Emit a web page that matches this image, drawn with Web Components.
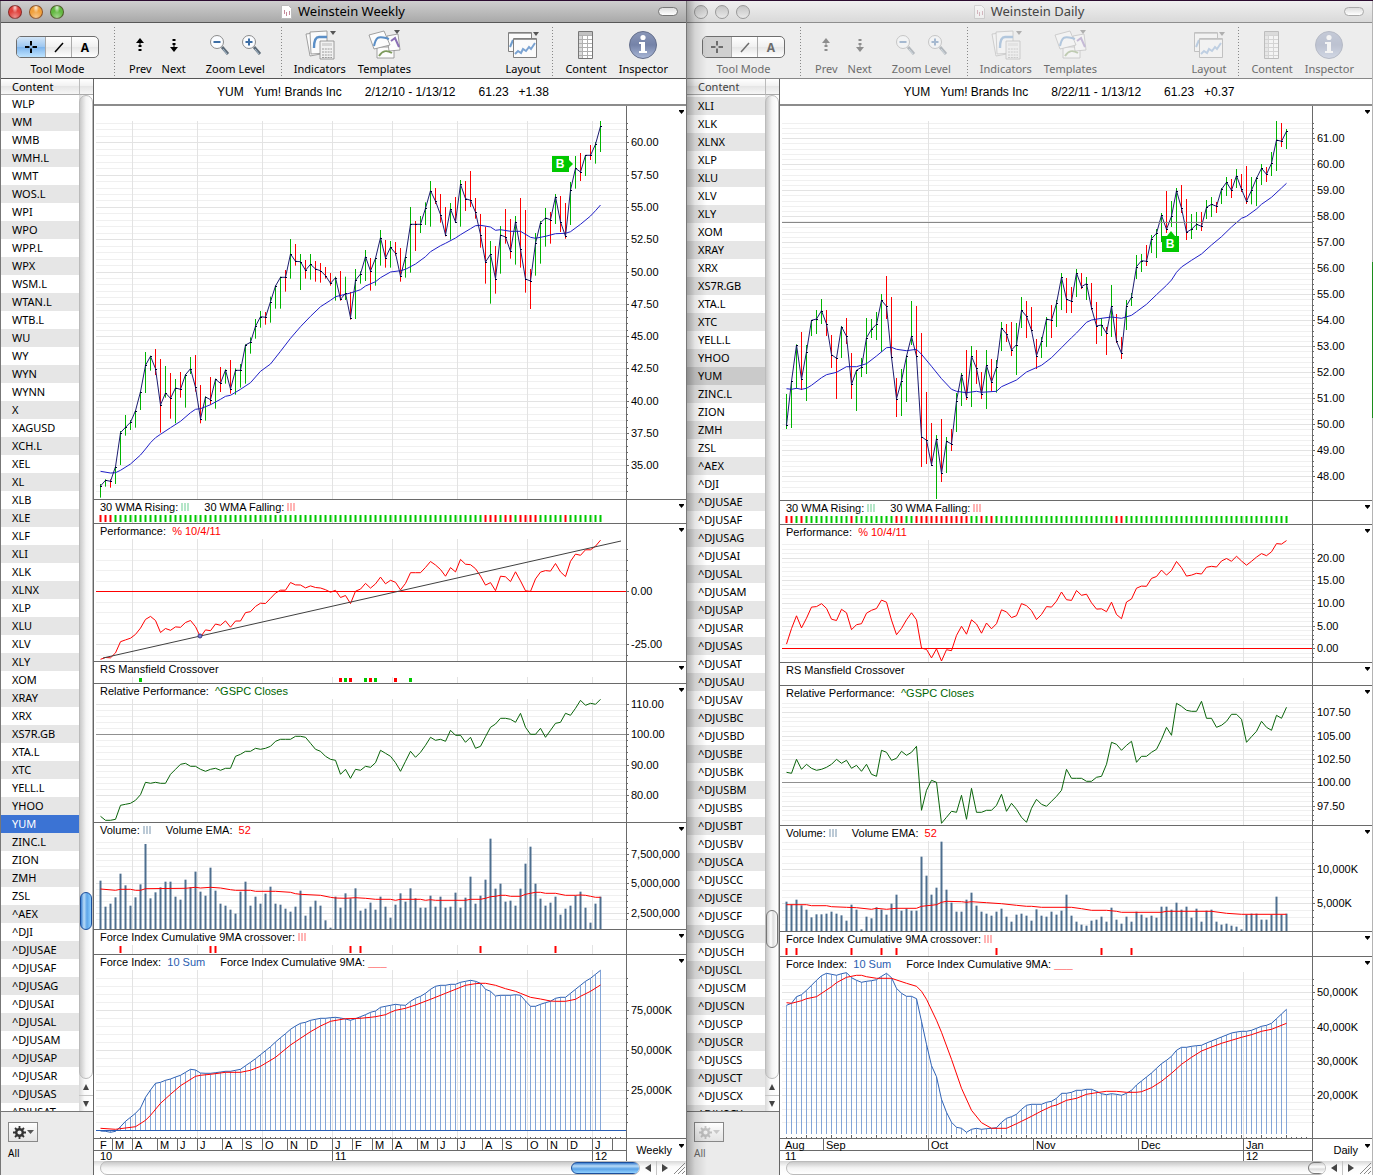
<!DOCTYPE html>
<html lang="en">
<head>
<meta charset="utf-8">
<title>Weinstein</title>
<style>
html, body { height: 100%; }
body {
  box-sizing: border-box;
  margin: 0;
  padding: 1px 1px 0 0;
  display: grid;
  grid-template-columns: 1fr 1fr;
  grid-template-rows: minmax(0, 1fr);
  overflow: hidden;
  background: linear-gradient(#2c0b30 0 1px, #b4b4b4 1px 262px, #1c8c1c 262px 418px, #b4b4b4 418px);
  font: 11px/15px "Noto Sans", "Open Sans", sans-serif;
  color: #000;
}
</style>
</head>
<body>
<chart-window name="weekly">Weinstein Weekly</chart-window>
<chart-window name="daily" inactive>Weinstein Daily</chart-window>

<script>
const CHART_FONT = `"Liberation Sans", Arial, sans-serif`;
const STEP = 5;
const FIRST_X = 6.5;
const GREEN = "#00b400";
const RED = "#ff0000";

const xAt = (i) => FIRST_X + i * STEP;

// symbols shown in the content lists
const shared = "XLI XLK XLNX XLP XLU XLV XLY XOM XRAY XRX XS7R.GB XTA.L XTC YELL.L YHOO YUM ZINC.L ZION ZMH ZSL ^AEX ^DJI ^DJUSAE ^DJUSAF ^DJUSAG ^DJUSAI ^DJUSAL ^DJUSAM ^DJUSAP ^DJUSAR ^DJUSAS ^DJUSAT";
const weeklySymbols = `WLP WM WMB WMH.L WMT WOS.L WPI WPO WPP.L WPX WSM.L WTAN.L WTB.L WU WY WYN WYNN X XAGUSD XCH.L XEL XL XLB XLE XLF ${shared}`.split(" ");
const dailySymbols = `${shared} ^DJUSAU ^DJUSAV ^DJUSBC ^DJUSBD ^DJUSBE ^DJUSBK ^DJUSBM ^DJUSBS ^DJUSBT ^DJUSBV ^DJUSCA ^DJUSCC ^DJUSCE ^DJUSCF ^DJUSCG ^DJUSCH ^DJUSCL ^DJUSCM ^DJUSCN ^DJUSCP ^DJUSCR ^DJUSCS ^DJUSCT ^DJUSCX ^DJUSCY`.split(" ");

// Series heights are in thirds of a pixel, counted down from each pane's offset.
// A price bar is high, low, close and g (up) or r (down).
const bars = (text) =>
  text.trim().split(/\s+/).map((bar) => {
    const [, high, low, close, dir] = bar.match(/(\d+)-(\d+)-(\d+)([gr])/);
    return { high: +high, low: +low, close: +close, up: dir === "g" };
  });
const list = (text) => text.trim().split(/\s+/).map(Number);
// index:height pairs, for lines that bend only now and then
const sparse = (text) => text.trim().split(/\s+/).map((pair) => pair.split(":").map(Number));

const weeklyBars = bars(`
1152-1193-1158g 1138-1160-1141g 1138-1163-1144r 1098-1152-1100g 993-1095-998g 945-1007-982g 960-990-967g 930-983-932g
873-930-875g 756-879-796g 767-812-769g 747-825-806r 777-998-915r 798-893-879g 819-956-895r 837-970-864g
816-893-868r 822-923-824g 771-822-806g 765-875-862r 855-970-957r 889-962-891g 831-914-899r 836-926-838g
801-876-850r 808-851-810g 780-881-867r 805-884-811g 792-863-811g 733-851-735g 712-761-727g 657-716-679g
633-683-650g 636-674-652r 590-668-605g 556-626-558g 530-626-532g 510-575-532r 417-536-462g 432-497-484r
462-570-485g 480-536-511r 462-539-493g 483-545-507r 489-548-512r 501-536-527r 519-557-550r 530-602-533g
513-602-598r 530-600-580g 576-659-653r 507-657-541g 514-551-522g 450-543-470g 474-572-513r 475-557-475g
390-497-413g 420-503-474r 423-503-442g 426-467-460r 444-545-529r 468-533-470g 321-518-373g 363-453-373r
348-399-373g 307-375-325g 243-380-272g 264-312-304r 282-368-344r 321-409-405r 309-419-327g 291-367-366r
240-380-253g 243-333-296r 213-321-301r 294-356-337r 342-443-404r 380-551-486r 423-611-463g 438-581-536r
378-521-405g 327-431-411r 357-476-454r 348-494-365g 294-503-448r 330-578-537r 507-627-543r 399-527-430g
363-491-368g 324-440-354g 336-431-359r 282-372-290g 288-396-366r 309-416-409r 246-375-270g 168-266-205g
159-243-216r 166-228-166g 135-180-166r 126-191-133g 63-156-79g`);

const dailyBars = bars(`
942-1047-1036g 903-1044-904g 793-926-795g 756-930-898r 795-963-815g 720-768-721g 690-762-717g 657-732-692g
690-768-732r 765-864-824r 834-957-835r 738-834-740g 714-792-769r 819-957-913r 870-993-871g 834-891-862g
714-882-773g 717-774-748g 696-780-733g 642-816-661g 588-717-679r 651-834-832r 894-1011-956r 867-1008-902g
826-966-829g 663-795-769g 678-830-829r 759-1161-1070r 936-1152-1081r 1029-1158-1154r 1065-1257-1076g 1017-1206-1180r
1071-1179-1084g 1047-1113-1092r 939-1056-962g 879-978-884g 810-960-952r 798-981-829g 810-912-865r 876-957-943r
810-987-856g 837-934-906r 840-938-862g 726-813-744g 732-786-762r 726-828-810r 729-885-794g 651-744-691g
663-774-709r 681-754-751r 777-867-827r 771-834-784g 711-801-717g 675-774-721r 660-741-670g 579-690-592g
594-699-658r 621-699-664r 567-651-579g 579-627-620r 591-660-611g 609-690-684r 666-792-738r 714-768-735g
741-825-760r 615-771-679g 702-789-784r 771-837-820r 660-750-677g 639-678-652g 525-597-560g 522-576-542g
495-558-544r 465-519-476g 447-534-460g 399-486-406g 333-459-448r 363-441-409g 324-486-332g 315-399-385r
357-480-457r 402-477-448g 396-450-433g 396-453-439r 360-417-382g 351-411-373g 366-399-379r 324-372-328g
291-348-307g 297-354-331r 267-324-287g 282-336-328r 258-372-364r 291-373-331g 291-378-295g 252-315-265g
261-306-283r 216-288-250g 123-273-180g 129-201-184r 147-207-154g`);

const two = (v) => v.toFixed(2);
const whole = (v) => v.toLocaleString("en-US");
const thousands = (v) => `${whole(v)}K`;

const wmaLegend = `30 WMA Rising: <legend-lines style="color:#b4e6c8"></legend-lines><i></i>30 WMA Falling: <legend-lines style="color:#ffb4b4"></legend-lines>`;
const perfLegend = `Performance:&nbsp; <span style="color:#f00">% 10/4/11</span>`;
const relLegend = `Relative Performance:&nbsp; <span style="color:#006400">^GSPC Closes</span>`;
const volLegend = `Volume: <legend-lines style="color:#bccad6"></legend-lines><i></i>Volume EMA:&nbsp; <span style="color:#f00">52</span>`;
const crossLegend = `Force Index Cumulative 9MA crossover: <legend-lines style="color:#ffb4b4"></legend-lines>`;
const forceLegend = `Force Index:&nbsp; <span style="color:#2a5db0">10 Sum</span><i></i>Force Index Cumulative 9MA: <span style="color:#ff7070">___</span>`;

const boards = {
  weekly: {
    quote: ["YUM", "Yum! Brands Inc", "2/12/10 - 1/13/12", "61.23", "+1.38"],
    symbols: weeklySymbols,
    listTop: 0,
    vThumb: [796, 38],
    hThumb: [477, 71],
    verticals: [38, 103, 168, 238, 298, 363, 433, 498],
    period: "Weekly",
    months: [[6, "F"], [18, "M"], [38, "A"], [63, "M"], [83, "J"], [103, "J"], [128, "A"], [148, "S"], [168, "O"], [193, "N"], [213, "D"], [238, "J"],
      [258, "F"], [278, "M"], [298, "A"], [323, "M"], [343, "J"], [363, "J"], [388, "A"], [408, "S"], [433, "O"], [453, "N"], [473, "D"], [498, "J"], [518, ""]],
    years: [[6, "10"], [238, "11"], [498, "12"]],
    panes: [
      { height: 393, offset: -6, bars: weeklyBars,
        scale: { y: 36, value: 60, px: 12.92, minor: 0.5, every: 5, format: two },
        line: sparse("0:1114 2:1119 3:1118 4:1111 6:1092 8:1065 9:1047 10:1028 11:1013 12:1003 14:983 16:964 18:938 19:928 20:926 22:914 24:898 25:889 26:886 28:868 30:848 32:814 34:792 36:754 38:715 40:680 42:649 44:620 46:601 47:590 50:579 52:569 53:558 55:545 56:533 58:516 60:512 61:508 63:492 65:470 66:455 68:437 69:430 71:414 72:404 74:386 75:377 76:376 78:381 79:391 80:389 82:394 84:394 86:412 87:415 89:409 91:401 93:400 94:395 96:373 98:348 99:332 100:315"),
        badge: { x: 458, y: 50, arrow: "right" } },
      { height: 23, legend: wmaLegend, strip: { reds: [0, 1, 2, 77, 78, 79, 81, 82, 84, 85, 86, 87, 93], all: true } },
      { height: 137, legend: perfLegend, zero: { y: 67, color: RED },
        scale: { y: 67, value: 0, px: 2.108, minor: 5, every: 5, format: two },
        values: weeklyBars.map((b) => ((60 - (b.close - 127) / 38.76) / 49.25 - 1) * 100), color: RED,
        trend: [9, 134, 527, 17], node: [106, 112] },
      { height: 21, legend: "RS Mansfield Crossover", dots: [[8, 1], [48, 0], [49, 1], [50, 0], [53, 1], [54, 0], [55, 1], [59, 0], [62, 1]] },
      { height: 138, legend: relLegend, offset: -194, zero: { y: 50, color: "#909090" },
        scale: { y: 50, value: 100, px: 3.03, minor: 2, every: 5, format: two }, color: "#0a640a",
        series: list("979 991 991 988 946 943 940 931 914 877 880 877 880 880 853 838 823 820 829 829 838 844 838 835 841 835 835 799 793 784 784 775 778 775 769 754 748 748 748 739 739 742 760 778 784 799 808 811 853 838 865 838 841 829 832 818 781 790 799 818 844 814 784 802 787 766 742 751 748 754 721 736 736 757 742 775 769 740 712 702 685 685 688 697 670 712 733 733 715 742 721 700 697 670 676 655 631 646 640 643 628") },
      { height: 106, legend: volLegend, offset: -3, base: 106,
        scale: { y: 60, value: 5000000, px: 0.00001184, minor: 500000, every: 5, format: whole },
        volume: list("182 260 251 232 161 196 257 232 193 72 235 217 202 185 185 230 239 179 202 155 215 227 143 212 251 257 269 281 215 185 257 230 251 221 200 251 254 266 275 260 212 287 260 242 257 301 323 230 263 220 235 205 272 266 248 269 230 260 293 254 220 245 205 235 263 263 227 260 230 263 260 218 263 233 170 251 227 179 56 206 191 245 242 257 206 131 80 191 236 257 248 230 284 266 257 227 215 263 308 251 230"),
        average: sparse("0:207 3:211 4:208 6:208 7:211 8:211 9:206 17:205 19:202 20:204 22:202 24:204 26:209 27:211 30:211 31:214 35:214 38:217 39:221 40:223 44:226 46:232 47:234 49:235 51:233 53:235 55:238 58:238 59:241 60:238 64:238 65:241 66:239 67:241 73:241 74:238 76:238 77:235 78:230 79:229 80:226 81:226 82:229 84:229 85:223 86:220 87:217 88:217 89:220 91:220 93:226 95:226 96:225 97:226 98:229 99:232 100:232") },
      { height: 24, legend: crossLegend, strip: { reds: [4, 22, 23, 50, 52, 76, 91] } },
      { height: 183, legend: forceLegend, offset: -135, base: 175, baseline: true, end: 171, ticks: [],
        scale: { y: 95, value: 50000, px: 0.0016, minor: 5000, every: 5, format: thousands },
        force: list("933 934 937 934 920 904 892 880 864 832 810 790 787 781 777 771 766 757 748 750 759 760 760 758 756 754 754 751 748 737 727 716 704 692 680 666 653 641 628 618 610 607 601 598 595 595 593 592 594 597 601 596 590 584 577 573 562 559 556 553 555 556 544 535 529 520 508 499 496 496 493 493 487 484 481 484 490 508 514 528 526 526 526 524 526 543 559 559 553 548 544 535 532 532 520 508 496 484 475 463 451"),
        average: sparse("0:925 3:928 7:920 9:901 10:886 12:850 14:823 16:797 19:769 20:766 22:763 24:759 25:757 28:757 30:751 32:739 35:712 38:675 40:655 42:635 44:618 46:604 49:596 52:595 54:592 55:590 57:584 58:577 59:571 61:565 63:555 66:538 69:520 72:502 73:496 75:491 76:490 77:490 79:496 81:506 83:514 84:520 86:532 88:537 90:543 91:544 93:544 95:538 96:529 98:514 100:495") },
    ],
  },
  daily: {
    quote: ["YUM", "Yum! Brands Inc", "8/22/11 - 1/13/12", "61.23", "+0.37"],
    symbols: dailySymbols,
    listTop: 2,
    vThumb: [814, 38],
    hThumb: [528, 21],
    verticals: [148, 463],
    period: "Daily",
    months: [[5, "Aug"], [43, "Sep"], [148, "Oct"], [253, "Nov"], [358, "Dec"], [463, "Jan"]],
    years: [[5, "11"], [463, "12"]],
    panes: [
      { height: 394, offset: -26, bars: dailyBars, cross: 116,
        scale: { y: 32, value: 61, px: 26, minor: 0.2, every: 5, format: two },
        line: sparse("0:926 1:928 2:925 3:928 4:925 5:916 7:893 8:884 10:877 12:860 14:860 16:851 18:828 20:803 21:802 22:808 24:812 26:808 27:823 29:859 31:896 33:928 34:934 36:938 38:934 39:937 42:934 43:920 46:900 48:876 51:856 53:833 55:803 57:773 58:759 60:727 61:720 63:715 65:711 67:715 69:706 70:695 72:673 74:644 76:616 77:600 78:577 79:561 81:541 83:522 85:495 87:470 89:441 91:415 92:409 94:387 95:373 97:352 99:324 100:310"),
        badge: { x: 382, y: 130, arrow: "up" } },
      { height: 23, legend: wmaLegend, strip: { reds: [0, 1, 3, 13, 22, 23, 26, 27, 28, 29, 30, 31, 32, 33, 34, 35, 36, 39, 41, 66, 67], all: true } },
      { height: 137, legend: perfLegend, zero: { y: 123, color: RED },
        scale: { y: 123, value: 0, px: 4.53, minor: 1, every: 5, format: two },
        values: dailyBars.map((b) => ((61 - (b.close - 175) / 78) / 49.48 - 1) * 100), color: RED },
      { height: 22, legend: "RS Mansfield Crossover", dots: [] },
      { height: 139, legend: relLegend, offset: -196, zero: { y: 96, color: "#909090" },
        scale: { y: 96, value: 100, px: 9.36, minor: 0.5, every: 5, format: two }, color: "#0a640a",
        series: list("847 850 808 838 823 835 841 838 832 823 808 820 811 835 826 844 823 853 859 781 787 811 805 784 796 787 769 961 901 871 877 1000 982 964 967 916 988 895 967 967 961 961 946 913 964 940 958 982 997 955 928 943 949 934 919 901 838 865 865 865 874 874 862 859 823 757 763 781 766 754 817 799 799 787 778 748 712 736 640 649 661 664 664 634 685 685 712 706 694 673 673 688 757 740 724 694 712 721 676 685 652") },
      { height: 105, legend: volLegend, offset: -6, base: 105,
        scale: { y: 77, value: 5000, px: 0.0068, minor: 1000, every: 5, format: thousands },
        volume: list("245 254 239 256 269 292 283 283 281 275 281 286 302 254 269 328 290 295 262 269 284 251 224 272 266 272 272 110 167 224 203 65 209 248 275 275 239 218 257 275 281 287 275 266 290 305 284 281 287 302 268 287 290 275 284 272 224 287 305 314 317 302 299 290 305 263 299 311 290 305 275 284 293 287 293 260 260 269 248 269 260 293 266 305 272 269 305 314 311 317 320 328 284 281 281 299 299 284 230 284 281"),
        average: sparse("0:254 4:254 5:257 8:257 9:260 12:262 14:263 17:268 18:265 20:268 22:265 26:265 27:259 30:254 31:247 32:244 35:245 36:247 37:245 40:248 43:251 46:256 48:259 49:259 51:262 57:262 59:266 61:271 64:271 66:274 67:277 75:277 76:274 85:274 88:280 91:283 100:283") },
      { height: 24, legend: crossLegend, strip: { reds: [0, 2, 13, 19, 22, 42, 63, 69] } },
      { height: 181, legend: forceLegend, offset: -137, base: 177, end: 169, ticks: [4, 9, 13, 18, 23, 28, 33, 38, 43, 48, 53, 58, 63, 67, 72, 77, 82, 87, 91, 95, 100],
        scale: { y: 35, value: 50000, px: 0.00342, minor: 2000, every: 5, format: thousands },
        force: list("556 550 530 524 511 496 481 467 460 463 466 461 458 473 481 487 484 482 479 469 460 473 505 520 529 529 536 604 673 737 770 838 877 907 922 925 937 928 925 928 926 925 923 907 895 890 883 868 856 853 853 853 847 844 835 820 820 817 811 811 808 808 814 821 824 821 823 826 820 811 795 783 771 759 745 731 721 709 691 682 682 679 677 676 669 663 657 651 645 639 636 634 634 631 625 619 616 610 596 582 568"),
        average: sparse("0:548 1:550 3:542 4:536 6:530 9:500 10:488 12:472 14:466 15:466 16:470 18:475 21:475 24:490 26:499 27:514 28:538 30:601 31:637 33:718 35:805 37:871 39:908 41:925 44:925 46:911 47:904 49:889 51:873 53:859 54:855 56:841 57:838 58:835 60:823 62:818 64:814 66:814 68:817 70:817 71:815 73:803 75:784 77:760 79:733 81:712 83:693 85:681 87:670 89:661 91:652 93:644 95:634 97:628 100:610") },
    ],
  },
};

const icons = {
  indicators: `<svg width="32" height="32"><g stroke="#8a8a8a" stroke-width=".8" fill="#fbfbfb"><path d="M2 5l17-2 3 21-16 3z"/><path d="M6 3l17-1v22l-16 1z"/></g><path d="M10 19c0-9 2-11 5-11h8" fill="none" stroke="#5b8fc7" stroke-width="2.4"/><path d="M16 12h14v18H16z" fill="#f1f1f1" stroke="#888" stroke-width=".8"/><path d="M18 14h10v3H18z" fill="#d5d5d5"/><path d="M18 20h10M18 23h10M18 26h10M18 28.500h10" stroke="#9a9a9a" stroke-dasharray="2 .8"/><path d="M26 2h6l-3 4z" fill="#555"/></svg>`,
  templates: `<svg width="34" height="32"><g stroke="#8a8a8a" stroke-width=".8" fill="#fcfcfc"><path d="M10 18h17v11H10z"/><path d="M20 7l11-2 2 16-11 1z"/><path d="M2 6l15-4 6 14-16 4z"/></g><path d="M7 17c2-9 4-10 12-8l3 1" fill="none" stroke="#5b8fc7" stroke-width="2"/><path d="M24 12l4-3 4 9" fill="none" stroke="#8a6fb5" stroke-width="2"/><path d="M12 27c4-6 8-6 13-3" fill="none" stroke="#7d9a5c" stroke-width="2"/><path d="M27 1h6l-3 4z" fill="#555"/></svg>`,
  layout: `<svg width="32" height="30"><g fill="#fbfbfb" stroke="#808080"><path d="M1.500 2.500h23v19h-23z"/><path d="M3 17l3-7" stroke="#6f9dce" stroke-width="2"/><path d="M6.500 8.500h23v19h-23z"/></g><path d="M2 3.500h22" stroke="#aaa"/><path d="M7 9.500h22" stroke="#999"/><path d="M8 24l3-3 3 2 2-4 3 2 3-4 2 2 4-6" fill="none" stroke="#7ba3d2" stroke-width="2"/><path d="M26 2h6l-3 4z" fill="#555"/></svg>`,
  content: `<svg width="18" height="30"><path d="M1.500 1.500h14v27h-14z" fill="#fff" stroke="#777"/><path d="M2 2h13v3H2z" fill="#c2c2c2"/><path d="M2 5h3v23H2z" fill="#dcdcdc"/><path d="M2 5.500h13M2 9.500h13M2 13.500h13M2 17.500h13M2 21.500h13M2 25.500h13M5.500 5v23M10.500 5v23" stroke="#b0b0b0"/></svg>`,
  inspector: `<svg width="30" height="30"><defs><linearGradient id="g" x2="0" y2="1"><stop stop-color="#8a97b8"/><stop offset=".5" stop-color="#7583a8"/><stop offset="1" stop-color="#aab8d8"/></linearGradient></defs><circle cx="15" cy="15" r="13.500" fill="url(#g)" stroke="#66708c"/><circle cx="15" cy="7.500" r="2.600" fill="#fff"/><path d="M11 12h6v9h2v2h-8v-2h2v-7h-2z" fill="#fff"/></svg>`,
  prev: `<svg width="10" height="16"><path d="M5 1l4 5H1z"/><path d="M3.500 8h3v2h-3zM3.500 12h3v2h-3zM4.500 5h1v3h-1z"/></svg>`,
  next: `<svg width="10" height="16"><path d="M5 15l4-5H1z"/><path d="M3.500 6h3v2h-3zM3.500 2h3v2h-3zM4.500 8h1v3h-1z"/></svg>`,
  zoomOut: `<svg width="22" height="24"><path d="M14 14l6 7" stroke="#5e6b78" stroke-width="3"/><path d="M15 16l4 5" stroke="#a9bfd0"/><circle cx="9" cy="9" r="6.500" fill="#fafcff" stroke="#8c8c8c"/><path d="M5.500 9h7" stroke="#3d6ea5" stroke-width="2"/></svg>`,
  zoomIn: `<svg width="22" height="24"><path d="M14 14l6 7" stroke="#5e6b78" stroke-width="3"/><path d="M15 16l4 5" stroke="#a9bfd0"/><circle cx="9" cy="9" r="6.500" fill="#fafcff" stroke="#8c8c8c"/><path d="M5.500 9h7M9 5.500v7" stroke="#3d6ea5" stroke-width="2"/></svg>`,
  menu: `<svg width="5" height="4"><path d="M0 0h5v1L2.500 4 0 1z"/></svg>`,
};

const reset = `
*, *::before { box-sizing: border-box; }
svg { display: block; }
button {
  all: unset;
  box-sizing: border-box;
  display: block;
}
`;

// every element renders once, from its own markup() and the css it names
class BaseElement extends HTMLElement {
  connectedCallback() {
    if (this.shadowRoot) return;
    const root = this.attachShadow({ mode: "open" });
    root.innerHTML = `<style>${reset}${this.constructor.css}</style>${this.markup()}`;
    this.ready(root);
  }

  ready() {}
}

class LegendLines extends BaseElement {
  static css = `:host { display: inline-block; }`;

  markup() {
    return `<svg width="8" height="8"><path d="M1 0v8M4 0v8M7 0v8" stroke="currentColor" stroke-width="2"/></svg>`;
  }
}

class TitleBar extends BaseElement {
  static css = `
:host {
  display: grid;
  grid-template-columns: 80px 1fr 80px;
  align-items: center;
  height: 22px;
  border-bottom: 1px solid #585858;
  background: linear-gradient(#cfcfcf, #a9a9a9);
  font-size: 13px;
  padding: 0 8px 0 7px;
}
:host([inactive]) {
  background: linear-gradient(#f0f0f0, #d9d9d9);
  border-color: #8e8e8e;
  color: #444;
}
.lights { display: flex; gap: 7px; }
.lights button {
  width: 14px;
  height: 14px;
  border-radius: 50%;
  border: 1px solid rgba(60, 20, 20, 0.55);
  background: radial-gradient(ellipse at 50% 15%, #fffc, transparent 35%), radial-gradient(circle at 50% 90%, #fff6, transparent 50%), var(--light);
}
:host([inactive]) .lights button {
  background: linear-gradient(#c4c4c4, #e8e8e8);
  border-color: #999;
}
.title { display: flex; gap: 6px; justify-content: center; align-items: center; }
:host([inactive]) .title svg { opacity: 0.5; }
.pill {
  justify-self: end;
  width: 20px;
  height: 9px;
  border: 1px solid #777;
  border-radius: 5px;
  background: linear-gradient(#ddd, #fff);
}
:host([inactive]) .pill { border-color: #aaa; }
`;

  markup() {
    return `
<div class="lights">
  <button aria-label="Close" style="--light:#e0423c"></button>
  <button aria-label="Minimize" style="--light:#f0a03c"></button>
  <button aria-label="Zoom" style="--light:#62b840"></button>
</div>
<div class="title">
  <svg width="11" height="14"><path d="M.5.500h7l3 3v10h-10z" fill="#fff" stroke="#bbb"/><path d="M3.500 5v4M5.500 7v4M8.500 6v4" stroke="#c58a9a"/></svg>
  <span><slot></slot></span>
</div>
<button class="pill" aria-label="Toggle toolbar"></button>`;
  }
}

class ToolItem extends BaseElement {
  static css = `
:host {
  display: block;
  padding-top: 2px;
  text-align: center;
  white-space: nowrap;
}
.item { display: grid; grid-template-rows: 32px 15px; justify-items: center; align-items: center; }
.icons { display: flex; gap: 10px; align-items: center; justify-content: center; }
:host([inactive]) { color: #6c6c6c; }
:host([inactive]) svg { opacity: 0.4; }
`;

  markup() {
    const names = this.getAttribute("icon").split(" ");
    if (names.length > 1) {
      return `<div class="item"><div class="icons">${names.map((n) => `<button aria-label="${n}">${icons[n]}</button>`).join("")}</div><slot></slot></div>`;
    }
    return `<button class="item">${icons[names[0]]}<span><slot></slot></span></button>`;
  }
}

class ToolMode extends BaseElement {
  static css = `
:host {
  display: grid;
  grid-template-rows: 32px 15px;
  align-content: start;
  justify-items: center;
  align-items: center;
  padding: 2px 3px 0 0;
}
.segments {
  display: grid;
  grid-template-columns: 28px 26px 27px;
  height: 22px;
  margin-top: 4px;
  border: 1px solid #6e6e6e;
  border-radius: 5px;
  overflow: hidden;
  background: linear-gradient(#fff, #f0f0f0 50%, #e6e6e6 50%, #fff);
}
button { display: grid; place-items: center; border-left: 1px solid #aaa; font-weight: bold; font-size: 12px; }
button:first-child { border: 0; background: linear-gradient(#d3e6f8, #9cc6f0 50%, #7db4ec 50%, #bfe4ff); }
:host([inactive]) { color: #6c6c6c; }
:host([inactive]) button:first-child { background: #d0d0d0; }
`;

  markup() {
    return `
<div class="segments">
  <button aria-label="Crosshair"><svg width="12" height="12" stroke="currentColor" stroke-width="2"><path d="M6 0v4.500M6 7.500V12M0 6h4.500M7.500 6H12"/></svg></button>
  <button aria-label="Line"><svg width="12" height="12" stroke="currentColor" stroke-width="1.500"><path d="M2 11l8-9"/></svg></button>
  <button>A</button>
</div>
<span>Tool Mode</span>`;
  }
}

class ToolBar extends BaseElement {
  static css = `
:host {
  display: flex;
  gap: 12px;
  height: 56px;
  padding: 4px 18px 0 15px;
  border-bottom: 1px solid #555;
  background: #ececec;
}
:host([inactive]) { border-color: #888; background: #ededed; }
.sep { width: 1px; height: 50px; background: repeating-linear-gradient(#888 0 1px, transparent 1px 3px); }
.nav { display: flex; gap: 10px; padding: 0 8px 0 2px; }
.zoom { padding-right: 4px; }
.space { flex: 1; }
`;

  markup() {
    const state = this.hasAttribute("inactive") ? "inactive" : "";
    const item = (icon, label, css = "") => `<tool-item icon="${icon}" class="${css}" ${state}>${label}</tool-item>`;
    return `
<tool-mode ${state}></tool-mode>
<div class="sep"></div>
<div class="nav">${item("prev", "Prev")}${item("next", "Next")}</div>
${item("zoomOut zoomIn", "Zoom Level", "zoom")}
<div class="sep"></div>
${item("indicators", "Indicators")}
${item("templates", "Templates")}
<div class="space"></div>
${item("layout", "Layout")}
<div class="sep"></div>
${item("content", "Content")}
${item("inspector", "Inspector")}`;
  }
}

// Aqua scroll bar, with both arrows at the far end
class ScrollBar extends BaseElement {
  static css = `
:host {
  display: grid;
  grid-template-rows: minmax(0, 1fr) 16px 16px;
  background: linear-gradient(90deg, #d8d8d8, #fafafa 40%, #fff);
}
:host([horizontal]) {
  grid-template: none / minmax(0, 1fr) 16px 16px 14px;
  background: linear-gradient(#d8d8d8, #fafafa 40%, #fff);
}
.track {
  border: 1px solid #bbb;
  border-radius: 7px;
  background: linear-gradient(90deg, #c9c9c9, #f4f4f4 50%, #fff);
  overflow: hidden;
}
:host([horizontal]) .track { background: linear-gradient(#c9c9c9, #f4f4f4 50%, #fff); margin-left: 6px; }
.thumb {
  width: 12px;
  height: var(--size);
  margin-top: var(--start);
  border-radius: 6px;
  border: 1px solid #1c4f9c;
  background: linear-gradient(90deg, #3c7fd0, #b9dcf8 30%, #5ba3e8 60%, #8fd0ff);
}
:host([horizontal]) .thumb {
  height: 12px;
  width: var(--size);
  margin: 0 0 0 var(--start);
  background: linear-gradient(#3c7fd0, #b9dcf8 30%, #5ba3e8 60%, #8fd0ff);
}
:host([inactive]) .thumb { border-color: #777; background: linear-gradient(90deg, #ccc, #fff 40%, #ddd 60%, #fff); }
:host([inactive][horizontal]) .thumb { background: linear-gradient(#ccc, #fff 40%, #ddd 60%, #fff); }
button { display: grid; place-items: center; }
button + button { border-top: 1px solid #c4c4c4; }
:host([horizontal]) button + button { border-top: 0; border-left: 1px solid #c4c4c4; }
`;

  markup() {
    const horizontal = this.hasAttribute("horizontal");
    const back = horizontal ? "M1 4l6-4v8z" : "M1 7l3-6 3 6z";
    const forward = horizontal ? "M7 4l-6-4v8z" : "M1 1l3 6 3-6z";
    return `
<div class="track"><div class="thumb"></div></div>
<button aria-label="Back"><svg width="8" height="8" fill="#444"><path d="${back}"/></svg></button>
<button aria-label="Forward"><svg width="8" height="8" fill="#444"><path d="${forward}"/></svg></button>
${horizontal ? `<svg width="14" height="14" stroke="#888"><path d="M2 13L13 2M6 13l7-7M10 13l3-3"/></svg>` : ""}`;
  }
}

class TickerList extends BaseElement {
  static css = `
:host {
  display: grid;
  grid-template: 16px minmax(0, 1fr) 64px / minmax(0, 1fr) 14px;
  min-height: 0;
  border-right: 1px solid #666;
}
h2, .corner {
  margin: 0;
  border-bottom: 1px solid #aaa;
  background: linear-gradient(#fff, #f0f0f0 50%, #e6e6e6 50%, #f6f6f6);
}
h2 { font: inherit; padding-left: 11px; }
.corner { border-left: 1px solid #bbb; }
ul {
  margin: 0;
  padding: 0;
  list-style: none;
  overflow: hidden;
  background: #fff;
}
li { height: 18px; line-height: 18px; padding-left: 11px; }
li.shaded { background: #e6e6e6; }
li.selected { background: #3b73d4; color: #fff; }
:host([inactive]) h2 { color: #444; }
:host([inactive]) li.selected { background: #cacaca; color: #000; }
footer {
  grid-column: 1 / -1;
  border-top: 1px solid #777;
  background: #ebebeb;
  padding: 10px 7px;
}
footer button {
  display: flex;
  align-items: center;
  justify-content: center;
  gap: 1px;
  width: 30px;
  height: 20px;
  margin-bottom: 3px;
  border: 1px solid #888;
  background: linear-gradient(#fff, #f0f0f0 50%, #e4e4e4);
}
footer span { font-size: 10px; }
:host([inactive]) footer { color: #666; }
:host([inactive]) footer svg { opacity: 0.25; }
`;

  markup() {
    const { symbols, listTop, vThumb } = boards[this.getAttribute("board")];
    // shading goes on from the rows scrolled out above
    const odd = listTop ? 0 : 1;
    const rows = symbols.map((s, i) => {
      const css = s === "YUM" ? "selected" : i % 2 === odd ? "shaded" : "";
      return `<li class="${css}">${s}</li>`;
    });
    return `
<h2>Content</h2>
<div class="corner"></div>
<ul style="padding-top:${listTop}px">${rows.join("")}</ul>
<scroll-bar ${this.hasAttribute("inactive") ? "inactive" : ""} style="--start:${vThumb[0]}px;--size:${vThumb[1]}px"></scroll-bar>
<footer>
  <button aria-label="Actions">
    <svg width="13" height="13"><circle cx="6.500" cy="6.500" r="3.300" fill="none" stroke="#333" stroke-width="2.400"/><path d="M6.500 0v3M6.500 10v3M0 6.500h3M10 6.500h3M2 2l2 2M9 9l2 2M11 2L9 4M4 9l-2 2" stroke="#333" stroke-width="1.800"/></svg>
    <svg width="7" height="4" fill="#555"><path d="M0 0h7L3.500 4z"/></svg>
  </button>
  <span>All</span>
</footer>`;
  }
}

const points = (pairs) => pairs.map(([x, y]) => `${x.toFixed(1)},${y.toFixed(1)}`).join(" ");
const polyline = (pairs, color) => `<polyline points="${points(pairs)}" fill="none" stroke="${color}"/>`;
const hline = (y, color) => `<line x1="2" x2="100%" y1="${y + 0.5}" y2="${y + 0.5}" stroke="${color}"/>`;

class ChartPane extends BaseElement {
  static css = `
:host {
  display: grid;
  grid-template-columns: minmax(0, 1fr) 60px;
  border-bottom: 1px solid #6a6a6a;
  background: #fff;
  font: 11px/15px ${CHART_FONT};
}
.plot, .legend { grid-area: 1 / 1; }
.plot { width: 100%; }
.legend { padding-left: 6px; white-space: nowrap; }
::slotted(i) { display: inline-block; width: 15px; }
.axis {
  display: grid;
  grid-template-columns: minmax(0, 1fr) 7px;
  border-left: 1px solid #6a6a6a;
}
.axis > svg { width: 100%; overflow: visible; }
button { height: 9px; padding-top: 3px; }
`;

  markup() {
    return `
<svg class="plot" height="${this.pane.height}">${this.grid()}${this.drawing()}</svg>
<div class="legend"><slot></slot></div>
<div class="axis">
  <svg height="${this.pane.height}">${this.labels()}</svg>
  <button aria-label="Pane menu">${icons.menu}</button>
</div>`;
  }

  // every horizontal of the scale that falls in the plot
  *levels() {
    const { scale, height, end = height - 4 } = this.pane;
    if (!scale) return;
    const count = Math.ceil(height / (scale.minor * scale.px));
    const middle = Math.round(scale.value / scale.minor);
    for (let k = middle - count; k <= middle + count; k++) {
      const y = Math.round(scale.y + 0.3 + (scale.value - k * scale.minor) * scale.px);
      if (y > 15 && y < end) yield { y, value: k * scale.minor, major: k % scale.every === 0 };
    }
  }

  grid() {
    let out = "";
    for (const { y, major } of this.levels()) out += hline(y, major ? "#e3e3e3" : "#f0f0f0");
    for (const x of this.verticals) out += `<path d="M${x + 0.5} 15V${this.pane.height}" stroke="#e3e3e3"/>`;
    return out;
  }

  labels() {
    let out = "";
    for (const { y, value, major } of this.levels()) {
      out += `<path d="M0 ${y + 0.5}h${major ? 2 : 1}" stroke="#6a6a6a"/>`;
      if (major) out += `<text x="4" y="${y + 4}">${this.pane.scale.format(value)}</text>`;
    }
    return out;
  }

  drawing() {
    const p = this.pane;
    const y = (v) => p.offset + v / 3;
    let out = "";
    if (p.zero) out += hline(p.zero.y, p.zero.color);
    if (p.bars) {
      p.bars.forEach((b, i) => {
        out += `<path d="M${xAt(i)} ${y(b.high)}V${y(b.low)}" stroke="${b.up ? GREEN : RED}"/>`;
      });
      out += polyline(p.line.map(([i, v]) => [xAt(i), y(v)]), "#2020c8");
      out += polyline(p.bars.map((b, i) => [xAt(i), y(b.close)]), "#1c1c70");
      p.bars.forEach((b, i) => {
        out += `<rect x="${xAt(i) - 0.5}" y="${Math.round(y(b.close))}" width="2" height="1" fill="#000030"/>`;
      });
    }
    if (p.cross) out += hline(p.cross, "#888");
    if (p.values) out += polyline(p.values.map((v, i) => [xAt(i), p.scale.y + 0.5 - v * p.scale.px]), p.color);
    if (p.series) out += polyline(p.series.map((v, i) => [xAt(i), y(v)]), p.color);
    if (p.volume) {
      p.volume.forEach((v, i) => (out += `<path d="M${xAt(i)} ${y(v)}V${p.base}" stroke="#4d6e8f" stroke-width="2"/>`));
    }
    if (p.force) {
      p.force.forEach((v, i) => (out += `<path d="M${xAt(i)} ${y(v)}V${p.base}" stroke="#84a6d8"/>`));
      out += polyline(p.force.map((v, i) => [xAt(i), y(v)]), "#2f62b5");
      if (p.baseline) out += hline(p.base, "#2a5fb5");
      for (let i = 0; i < 105; i++) out += `<path d="M${xAt(i)} ${p.height}v-1" stroke="#666"/>`;
      p.ticks.forEach((i) => (out += `<path d="M${xAt(i)} ${p.height}v-3" stroke="#666"/>`));
    }
    if (p.average) out += polyline(p.average.map(([i, v]) => [xAt(i), y(v)]), RED);
    if (p.strip) {
      for (let i = 0; i <= 100; i++) {
        const red = p.strip.reds.includes(i);
        if (!red && !p.strip.all) continue;
        out += `<path d="M${xAt(i)} ${p.height - 8}v7" stroke="${red ? RED : "#00c800"}" stroke-width="2"/>`;
      }
    }
    if (p.dots) {
      p.dots.forEach(([i, up]) => (out += `<path d="M${xAt(i)} ${p.height - 5}v4" stroke="${up ? "#00c800" : RED}" stroke-width="3"/>`));
    }
    if (p.trend) {
      const [x1, y1, x2, y2] = p.trend;
      out += `<line x1="${x1}" y1="${y1}" x2="${x2}" y2="${y2}" stroke="#404040"/>`;
      out += `<circle cx="${p.node[0]}" cy="${p.node[1]}" r="2" fill="#7878d8" stroke="#404080"/>`;
    }
    if (p.badge) {
      const { x, y: top, arrow } = p.badge;
      const tip = arrow === "up" ? `M${x + 5} ${top}l4-5 4 5z` : `M${x + 17} ${top + 4}l4 4-4 4z`;
      out += `<path d="M${x} ${top}h17v16h-17z${tip}" fill="#00c800"/>`;
      out += `<text x="${x + 8}" y="${top + 12}" text-anchor="middle" font-size="12" font-weight="bold" fill="#fff">B</text>`;
    }
    return out;
  }
}

class TimeAxis extends BaseElement {
  static css = `
:host {
  display: grid;
  grid-template-columns: minmax(0, 1fr) 60px;
  background: #fff;
  font: 11px/15px ${CHART_FONT};
}
.dates { width: 100%; overflow: visible; }
.period {
  display: grid;
  grid-template-columns: minmax(0, 1fr) 7px;
  border-left: 1px solid #6a6a6a;
}
.period span { align-self: center; text-align: right; padding-right: 7px; }
.period button { padding-top: 4px; height: 9px; }
`;

  markup() {
    const { months, years, period } = boards[this.getAttribute("board")];
    const row = (items, top, size) =>
      items.map(([x, label], i) => {
        const rule = i ? `<path d="M${x + 0.5} ${top}v${size}" stroke="#6a6a6a"/>` : "";
        return `${rule}<text x="${i ? x + 3 : x}" y="${top + size - 1}">${label}</text>`;
      }).join("");
    return `
<svg class="dates" height="22">
  <line x2="100%" y1="11.500" y2="11.500" stroke="#6a6a6a"/>
  ${row(months, 0, 11)}
  ${row(years, 12, 10)}
</svg>
<div class="period"><span>${period}</span><button aria-label="Period menu">${icons.menu}</button></div>`;
  }
}

class ChartBoard extends BaseElement {
  static css = `
:host {
  display: flex;
  flex-direction: column;
  min-width: 0;
  background: #fff;
}
header {
  display: flex;
  gap: 10px;
  justify-content: center;
  height: 27px;
  padding-right: 14px;
  border-bottom: 2px solid #8c8c8c;
  font: 12px/27px ${CHART_FONT};
}
header span:nth-child(3) { margin: 0 13px; }
chart-pane:nth-last-of-type(1) { flex: 1; }
scroll-bar { height: 14px; }
`;

  markup() {
    const { quote, hThumb } = boards[this.getAttribute("board")];
    const name = this.getAttribute("board");
    return `
<header>${quote.map((q) => `<span>${q}</span>`).join("")}</header>
<time-axis board="${name}"></time-axis>
<scroll-bar horizontal ${this.hasAttribute("inactive") ? "inactive" : ""} style="--start:${hThumb[0] - 7}px;--size:${hThumb[1]}px"></scroll-bar>`;
  }

  ready(root) {
    const { panes, verticals } = boards[this.getAttribute("board")];
    const axis = root.querySelector("time-axis");
    for (const pane of panes) {
      const el = document.createElement("chart-pane");
      el.pane = pane;
      el.verticals = verticals;
      el.innerHTML = pane.legend || "";
      axis.before(el);
    }
  }
}

class ChartWindow extends BaseElement {
  static css = `
:host {
  display: grid;
  grid-template: auto auto minmax(0, 1fr) / 93px minmax(0, 1fr);
  min-width: 0;
  border-left: 1px solid #777;
}
title-bar, tool-bar { grid-column: 1 / -1; }
/* shadow that the front window casts on this one */
:host([inactive])::before {
  content: "";
  grid-area: 1 / 1 / -1 / 2;
  z-index: 1;
  width: 20px;
  background: linear-gradient(90deg, rgba(0, 0, 0, 0.3), rgba(0, 0, 0, 0.1) 40%, transparent);
  pointer-events: none;
}
title-bar { grid-row: 1; }
tool-bar { grid-row: 2; }
ticker-list { grid-area: 3 / 1; }
chart-board { grid-area: 3 / 2; }
`;

  markup() {
    const name = this.getAttribute("name");
    const state = this.hasAttribute("inactive") ? "inactive" : "";
    return `
<title-bar ${state}><slot></slot></title-bar>
<tool-bar ${state}></tool-bar>
<ticker-list board="${name}" ${state}></ticker-list>
<chart-board board="${name}" ${state}></chart-board>`;
  }
}

customElements.define("legend-lines", LegendLines);
customElements.define("title-bar", TitleBar);
customElements.define("tool-item", ToolItem);
customElements.define("tool-mode", ToolMode);
customElements.define("tool-bar", ToolBar);
customElements.define("scroll-bar", ScrollBar);
customElements.define("ticker-list", TickerList);
customElements.define("chart-pane", ChartPane);
customElements.define("time-axis", TimeAxis);
customElements.define("chart-board", ChartBoard);
customElements.define("chart-window", ChartWindow);
</script>
</body>
</html>
